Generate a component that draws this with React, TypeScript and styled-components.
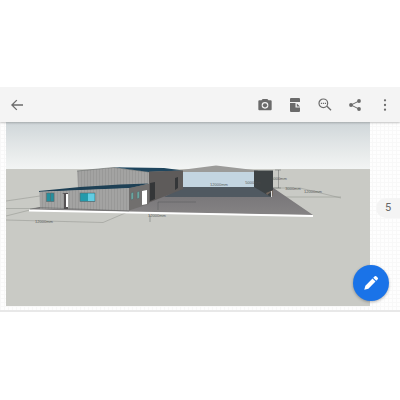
import React from 'react';
import styled, { createGlobalStyle } from 'styled-components';

const GlobalStyle = createGlobalStyle`
  * { box-sizing: border-box; }
  body { margin: 0; background: #fff; font-family: Roboto, sans-serif; }
`;

const Viewer = styled.main`
  padding: 87px 0;
`;

const Toolbar = styled.header`
  position: relative;
  z-index: 1;
  display: flex;
  align-items: center;
  justify-content: space-between;
  height: 35px;
  padding: 0 5px 0 7px;
  background: #f4f4f4;
  box-shadow: 0 1px 2px rgba(0, 0, 0, 0.22);
  clip-path: inset(0 0 -4px 0);
`;

const Actions = styled.div`
  display: flex;
  gap: 10px;
`;

const IconButton = styled.button`
  display: grid;
  place-items: center;
  width: 20px;
  height: 24px;
  padding: 0;
  border: 0;
  background: none;
  color: #6b6b6b;
  svg { display: block; fill: currentColor; }
`;

const Canvas = styled.section`
  position: relative;
  padding: 0 30px 4px 6px;
  border-bottom: 2px solid #e8e8e8;
  background-color: #fefefe;
  background-image: linear-gradient(#f8f8f8 1px, transparent 1px),
    linear-gradient(90deg, #f8f8f8 1px, transparent 1px);
  background-size: 4px 4px;
`;

const Drawing = styled.svg`
  display: block;
  width: 100%;
  height: auto;
`;

const PageNumber = styled.div`
  position: absolute;
  top: 76px;
  right: 0;
  width: 24px;
  height: 20px;
  border-radius: 10px 0 0 10px;
  background: #f4f4f4;
  color: #666;
  font-size: 11px;
  line-height: 20px;
  text-align: center;
`;

const EditButton = styled.button`
  position: absolute;
  right: 11px;
  bottom: 9px;
  display: grid;
  place-items: center;
  width: 36px;
  height: 36px;
  padding: 0;
  border: 0;
  border-radius: 50%;
  background: #1a73e8;
  color: #fff;
  box-shadow: 0 1px 3px rgba(0, 0, 0, 0.3);
  svg { display: block; fill: currentColor; }
`;

type Dimension = { x: number; y: number; label: string };

const dimensions: Dimension[] = [
  { x: 44, y: 223, label: '12000mm' },
  { x: 157, y: 217, label: '12000mm' },
  { x: 219, y: 186, label: '12000mm' },
  { x: 253, y: 184, label: '5000mm' },
  { x: 279, y: 180, label: '6000mm' },
  { x: 293, y: 190, label: '3000mm' },
  { x: 313, y: 193, label: '12000mm' },
];

function BuildingDrawing() {
  return (
    <Drawing viewBox="6 122 364 184" role="img" aria-label="Warehouse model">
      <defs>
        <linearGradient id="sky" x1="0" y1="0" x2="0" y2="1">
          <stop offset="0" stopColor="#cfd6d9" />
          <stop offset="0.45" stopColor="#e1e5e6" />
          <stop offset="1" stopColor="#f3f5f4" />
        </linearGradient>
        <pattern id="cladding" width="3" height="8" patternUnits="userSpaceOnUse">
          <rect width="3" height="8" fill="#a3a3a2" />
          <rect width="1" height="8" fill="#999998" />
        </pattern>
        <linearGradient id="slab" x1="0" y1="0" x2="0" y2="1">
          <stop offset="0" stopColor="#747275" />
          <stop offset="1" stopColor="#858384" />
        </linearGradient>
      </defs>
      <rect x="6" y="122" width="364" height="48" fill="url(#sky)" />
      <rect x="6" y="169" width="364" height="137" fill="#c9cac5" />

      <g fill="none" stroke="#999a96" strokeWidth="0.6">
        <path d="M6 201 40 196M6 208.500H35M6 216 30 210M6 220 103 222.500 130 211" />
        <path d="M272 188 300 188 341 198M272 197H341" />
      </g>

      <path d="M29 209.500 40 207 128 206 183 187H272L313 215 150 212.500Z" fill="url(#slab)" />
      <path d="M183 170H255V188H183Z" fill="#c3d5e1" />
      <path d="M183 187H262L271 197H164Z" fill="#505961" />
      <path d="M177 170.500 216 165.500 258 170.500V172H177Z" fill="#9b9b99" />
      <path d="M254 170.500H273V192L271 197 254 187Z" fill="#3d4244" />
      <path d="M266 193 273 190V196H271V192L267 195Z" fill="#72665d" />
      <path d="M271 191H272V197H271Z" fill="#ddd" />

      <path d="M77 171 114 167.500 149 172V187L78 188Z" fill="url(#cladding)" />
      <path d="M77 171 114 167.500 149 172" fill="none" stroke="#656968" strokeWidth="0.6" />
      <path d="M114 167.200 164 168 183 170.500 149 172Z" fill="#1f465e" />
      <path d="M149 171.500 183 170.500V189L148 203 129 207V188L149 184Z" fill="#5e5b5a" />
      <path d="M175 178 178 177V188L175 190Z" fill="#343638" />
      <path d="M150 183 155 182V199L150 201Z" fill="#343638" />

      <path d="M39 191 80 187 120 184.500 149 183.500 129 188.500 39 192Z" fill="#1e4055" />
      <path d="M39.500 191.800 129 188V210.500L40 208.500Z" fill="url(#cladding)" />
      <path d="M129 188 149 184V204L129 210.500Z" fill="#716f6e" />
      <path d="M142 191 147 190V204L142 205Z" fill="#fff" />
      <g stroke="#5d6669" strokeWidth="0.6">
        <rect x="46.500" y="193" width="7.500" height="8.500" fill="#258f9d" />
        <path d="M50.500 193V201" />
        <rect x="80" y="193" width="15" height="8.500" fill="#249aab" />
        <rect x="88" y="193.500" width="6.500" height="7.500" fill="#62cce2" stroke="none" />
        <path d="M131 193 133.500 192V199L131 200ZM137 192 139.500 191V198L137 199Z" fill="#68a7a1" />
      </g>
      <path d="M62 193H68V209H64V194Z" fill="#555153" />
      <path d="M66 194H68V207H66Z" fill="#fff" />
      <path d="M29 209.500 129 211.500 313 215V217L29 211.500Z" fill="#fff" />

      <g fill="none" stroke="#4f5050" strokeWidth="0.4">
        <path d="M30 209 40 207.500 129 211M158 202H196M158 202V210M150 215V222M275 170H281M278.500 170V188M273 188H281" />
      </g>
      <g fill="#484949" fontFamily="Liberation Sans, sans-serif" fontSize="4" textAnchor="middle" opacity="0.85">
        {dimensions.map((d) => (
          <text key={`${d.x}-${d.y}`} x={d.x} y={d.y}>{d.label}</text>
        ))}
      </g>
    </Drawing>
  );
}

export default function App() {
  return (
    <>
      <GlobalStyle />
      <Viewer>
        <Toolbar>
          <IconButton aria-label="Back">
            <svg width="16" height="16" viewBox="0 0 24 24"><path d="M21 11H6.800l5.600-5.600L11 4l-8 8 8 8 1.400-1.400L6.800 13H21z" /></svg>
          </IconButton>
          <Actions>
            <IconButton aria-label="Camera">
              <svg width="16" height="16" viewBox="0 0 24 24"><path fillRule="evenodd" d="M8.500 3 6.700 5H3.500A1.500 1.500 0 0 0 2 6.500v12A1.500 1.500 0 0 0 3.500 20h17a1.500 1.500 0 0 0 1.500-1.500v-12A1.500 1.500 0 0 0 20.500 5h-3.200L15.500 3zM12 7.500a5 5 0 1 1 0 10 5 5 0 0 1 0-10" /><circle cx="12" cy="12.500" r="3.200" /></svg>
            </IconButton>
            <IconButton aria-label="Page layout">
              <svg width="10" height="14" viewBox="0 0 10 14"><path d="M1 0h8q1 0 1 1v3H0V1q0-1 1-1M0 5h5.500v4.500H10V13q0 1-1 1H1q-1 0-1-1zM6.800 5.500 10 8.500H6.800z" /></svg>
            </IconButton>
            <IconButton aria-label="Zoom out">
              <svg width="16" height="16" viewBox="0 0 24 24"><path d="M15 14 21 20M5.800 9.500h1.800m1.200 0h1.800m1.200 0h1.800" fill="none" stroke="currentColor" strokeWidth="2" /><circle cx="9.500" cy="9.500" r="6.500" fill="none" stroke="currentColor" strokeWidth="1.800" /></svg>
            </IconButton>
            <IconButton aria-label="Share">
              <svg width="12" height="12" viewBox="0 0 24 24"><path d="M4 12 20 4M4 12l16 8" stroke="currentColor" strokeWidth="2" /><circle cx="4" cy="12" r="3.800" /><circle cx="20" cy="4" r="3.800" /><circle cx="20" cy="20" r="3.800" /></svg>
            </IconButton>
            <IconButton aria-label="More options">
              <svg width="16" height="16" viewBox="0 0 24 24"><circle cx="12" cy="5" r="1.700" /><circle cx="12" cy="12" r="1.700" /><circle cx="12" cy="19" r="1.700" /></svg>
            </IconButton>
          </Actions>
        </Toolbar>
        <Canvas>
          <BuildingDrawing />
          <PageNumber>5</PageNumber>
          <EditButton aria-label="Edit">
            <svg width="18" height="18" viewBox="0 0 24 24"><path d="M3 21 4.500 15.500 14 6l4 4-9.500 9.500zM15 5l2-2q1-1 2 0l2 2q1 1 0 2l-2 2z" /></svg>
          </EditButton>
        </Canvas>
      </Viewer>
    </>
  );
}
